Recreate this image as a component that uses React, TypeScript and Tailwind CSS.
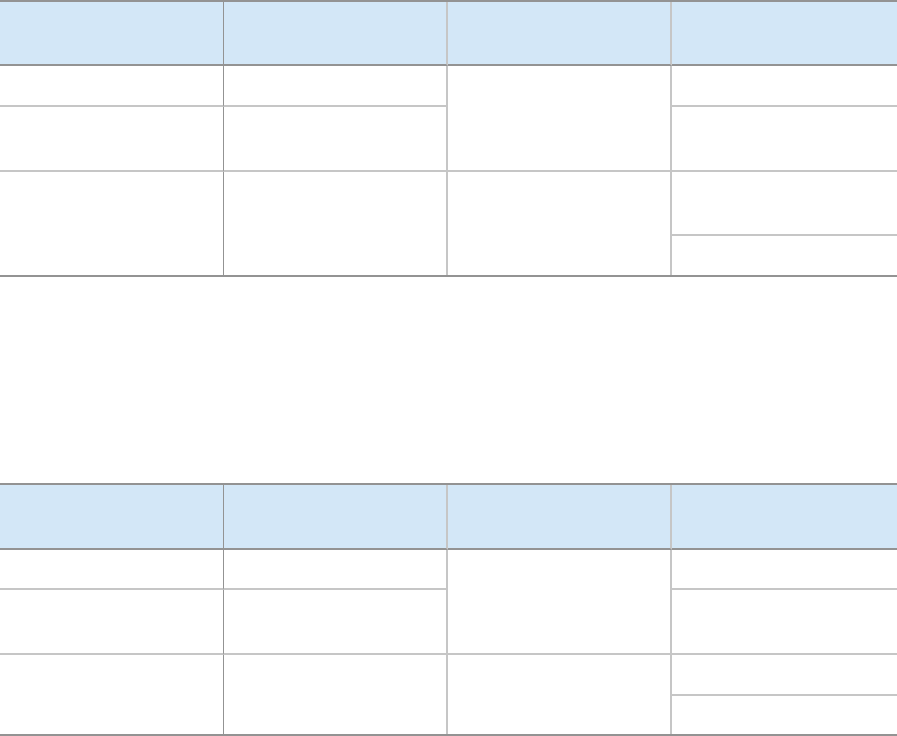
const dark = "border-[#939393]"
const light = "border-[#c6c6c6]"

type Cell = { col: string; row: string; last?: boolean }

// right-hand divider per column: first one is thin + dark, the rest thick + light
const colRight = [
  "border-r border-r-[#939393]",
  "border-r-2 border-r-[#c6c6c6]",
  "border-r-2 border-r-[#c6c6c6]",
  "",
]

const cells: Cell[] = [
  { col: "1 / 2", row: "2 / 3" },
  { col: "1 / 2", row: "3 / 4" },
  { col: "1 / 2", row: "4 / 6", last: true },
  { col: "2 / 3", row: "2 / 3" },
  { col: "2 / 3", row: "3 / 4" },
  { col: "2 / 3", row: "4 / 6", last: true },
  { col: "3 / 4", row: "2 / 4" },
  { col: "3 / 4", row: "4 / 6", last: true },
  { col: "4 / 5", row: "2 / 3" },
  { col: "4 / 5", row: "3 / 4" },
  { col: "4 / 5", row: "4 / 5" },
  { col: "4 / 5", row: "5 / 6", last: true },
]

function Table({ rows }: { rows: string }) {
  return (
    <div className={`grid grid-cols-[224px_224px_224px_1fr] border-t-2 border-b-2 ${dark} ${rows}`}>
      {[0, 1, 2, 3].map((i) => (
        <div
          key={"h" + i}
          className={`bg-[#d3e7f7] border-b-2 border-b-[#939393] ${colRight[i]}`}
          style={{ gridColumnStart: i + 1, gridRowStart: 1 }}
        />
      ))}
      {cells.map((c, i) => {
        const colIdx = Number(c.col.split("/")[0]) - 1
        return (
          <div
            key={i}
            className={`bg-white ${colRight[colIdx]} ${c.last ? "" : `border-b-2 ${light}`}`}
            style={{ gridColumn: c.col, gridRow: c.row }}
          />
        )
      })}
    </div>
  )
}

export default function App() {
  return (
    <div className="w-[897px] h-[736px] bg-white overflow-hidden font-['Liberation_Sans',sans-serif]">
      <Table rows="grid-rows-[64px_41px_65px_64px_39px]" />
      <div className="mt-[206px]">
        <Table rows="grid-rows-[65px_40px_65px_41px_38px]" />
      </div>
    </div>
  )
}
